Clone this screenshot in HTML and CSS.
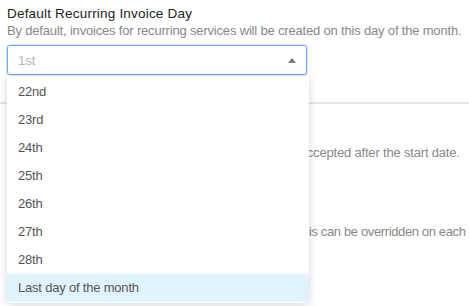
FILE: index.html
```html
<!DOCTYPE html>
<html lang="en">
<head>
  <meta charset="UTF-8">
  <meta name="viewport" content="width=device-width, initial-scale=1.0">
  <title>Invoice Settings</title>
  <link rel="stylesheet" href="styles.css">
</head>
<body>
  <div class="settings">
    <!-- Recurring invoice day -->
    <div class="setting first">
      <label class="setting-title">Default Recurring Invoice Day</label>
      <p class="setting-help">By default, invoices for recurring services will be created on this day of the month.</p>
      <div class="select-wrap">
        <div class="select open">
          <span class="select-value">1st</span>
          <span class="select-arrow"></span>
        </div>
        <ul class="select-menu">
          <li>22nd</li>
          <li>23rd</li>
          <li>24th</li>
          <li>25th</li>
          <li>26th</li>
          <li>27th</li>
          <li>28th</li>
          <li class="hovered">Last day of the month</li>
        </ul>
      </div>
    </div>

    <div class="setting">
      <label class="setting-title">Invoice Start Date</label>
      <p class="setting-help">Recurring invoices are only created when a quote is accepted after the start date.</p>
    </div>

    <div class="setting">
      <label class="setting-title">Default Payment Terms</label>
      <p class="setting-help tight">Used as the default due date for all new invoices, and this can be overridden on each invoice.</p>
    </div>

    <div class="setting">
      <label class="setting-title">Total Value</label>
    </div>
  </div>
</body>
</html>
```

FILE: styles.css
```css
* {
  margin: 0;
  padding: 0;
  box-sizing: border-box;
}

body {
  font-family: 'Liberation Sans', sans-serif;
  font-size: 13px;
  background-color: #fff;
  color: #333;
  overflow: hidden;
}

.settings {
  padding: 5px 0 0;
}

.setting {
  padding: 0 2px 45px 7px;
}

.setting.first {
  padding-bottom: 27px;
  border-bottom: 2px solid #e6e6e6;
  margin-bottom: 23px;
}

.setting-title {
  display: block;
  line-height: 17px;
  font-size: 13.5px;
  letter-spacing: 0.2px;
  color: #222;
}

.setting-help {
  line-height: 17px;
  color: #888;
  letter-spacing: -0.18px;
}

.setting-help.tight {
  letter-spacing: -0.37px;
}

.select-wrap {
  position: relative;
  width: 300px;
  margin-top: 6px;
}

.select {
  height: 30px;
  border: 1px solid #d8d8d8;
  border-radius: 3px;
  display: flex;
  align-items: center;
  justify-content: space-between;
  padding: 0 8px 0 10px;
}

.select.open {
  border-color: #66aaf6;
  box-shadow: 0 0 0 1px rgba(102, 170, 246, 0.25);
}

.select-value {
  color: #b4b4b4;
}

.select-arrow {
  width: 0;
  height: 0;
  border-left: 4px solid transparent;
  border-right: 4px solid transparent;
  border-bottom: 5px solid #777;
  margin-right: 2px;
}

.select-menu {
  position: absolute;
  top: 31px;
  left: 0;
  width: 302px;
  list-style: none;
  background-color: #fff;
  border-radius: 0 0 3px 3px;
  box-shadow: 0 2px 8px rgba(0, 0, 0, 0.16);
  padding: 2px 0 1px;
  z-index: 2;
}

.select-menu li {
  height: 28px;
  line-height: 28px;
  padding: 0 11px;
  color: #555;
  letter-spacing: -0.2px;
}

.select-menu li.hovered {
  background-color: #e0f4fd;
}
```
